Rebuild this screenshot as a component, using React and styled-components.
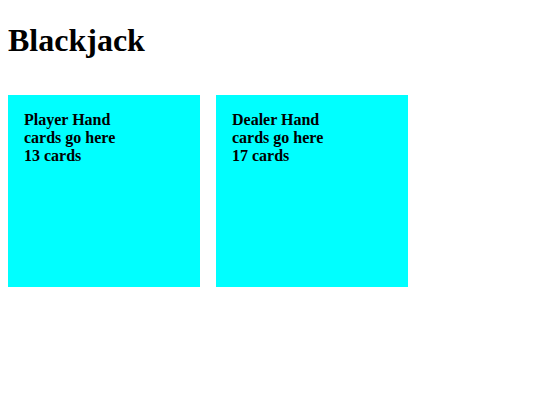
import React from "react";
import styled, { createGlobalStyle } from "styled-components";

const Global = createGlobalStyle`
  body {
    margin: 8px;
    font-family: "Liberation Serif", "Times New Roman", serif;
    background: #ffffff;
    color: #000000;
  }
`;

const Title = styled.h1`
  font-size: 32px;
  font-weight: bold;
  margin: 14px 0 0;
`;

const Table = styled.div`
  display: flex;
  gap: 16px;
  margin-top: 36px;
`;

const Hand = styled.div`
  width: 192px;
  height: 192px;
  box-sizing: border-box;
  padding: 16px;
  background: #00ffff;
  font-weight: bold;
  font-size: 16px;
`;

const hands = [
  { name: "Player Hand", count: 13 },
  { name: "Dealer Hand", count: 17 },
];

export default function App() {
  return (
    <>
      <Global />
      <Title>Blackjack</Title>
      <Table>
        {hands.map((h) => (
          <Hand key={h.name}>
            <div>{h.name}</div>
            <div>cards go here</div>
            <div>{h.count} cards</div>
          </Hand>
        ))}
      </Table>
    </>
  );
}
